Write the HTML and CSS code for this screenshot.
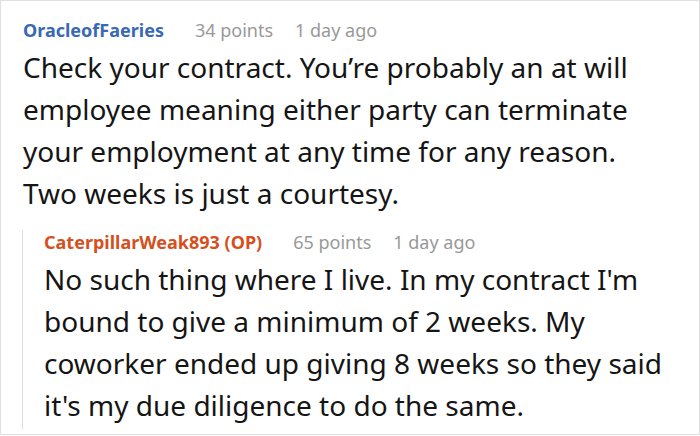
FILE: index.html
```html
<!DOCTYPE html>
<html>
<head>
<meta charset="utf-8">
<link rel="stylesheet" href="styles.css">
</head>
<body>
<div class="card">
  <div class="comment">
    <div class="meta">
      <span class="user">OracleofFaeries</span>
      <span class="info">34 points</span>
      <span class="info">1 day ago</span>
    </div>
    <p class="body">Check your contract. You’re probably an at will employee meaning either party can terminate your employment at any time for any reason. Two weeks is just a courtesy.</p>
    <div class="reply">
      <div class="meta">
        <span class="user op">CaterpillarWeak893 (OP)</span>
        <span class="info">65 points</span>
        <span class="info">1 day ago</span>
      </div>
      <p class="body">No such thing where I live. In my contract I'm bound to give a minimum of 2 weeks. My coworker ended up giving 8 weeks so they said it's my due diligence to do the same.</p>
    </div>
  </div>
</div>
</body>
</html>
```
FILE: styles.css
```css
* { box-sizing: border-box; }
html, body { margin: 0; padding: 0; background: #fff; }
.card {
  width: 700px;
  height: 435px;
  border: 1px solid #e0e0e0;
  padding: 17px 31px 0 22px;
  font-family: "Noto Sans", "Open Sans", sans-serif;
}
.meta {
  display: flex;
  align-items: baseline;
  font-size: 18px;
  line-height: 24px;
}
.user { font-weight: 700; color: #3a69b3; margin-right: 9px; }
.user.op { color: #d5501d; }
.info { color: #999; margin-left: 22px; }
.body {
  margin: 4px 0 0 0;
  font-size: 28px;
  line-height: 42px;
  color: #151515;
}
.reply {
  margin-top: 26px;
  margin-left: -1px;
  border-left: 1px solid #e0e0e0;
  padding: 0 0 3px 21px;
}
.reply .meta { margin-top: -10px; }
```
